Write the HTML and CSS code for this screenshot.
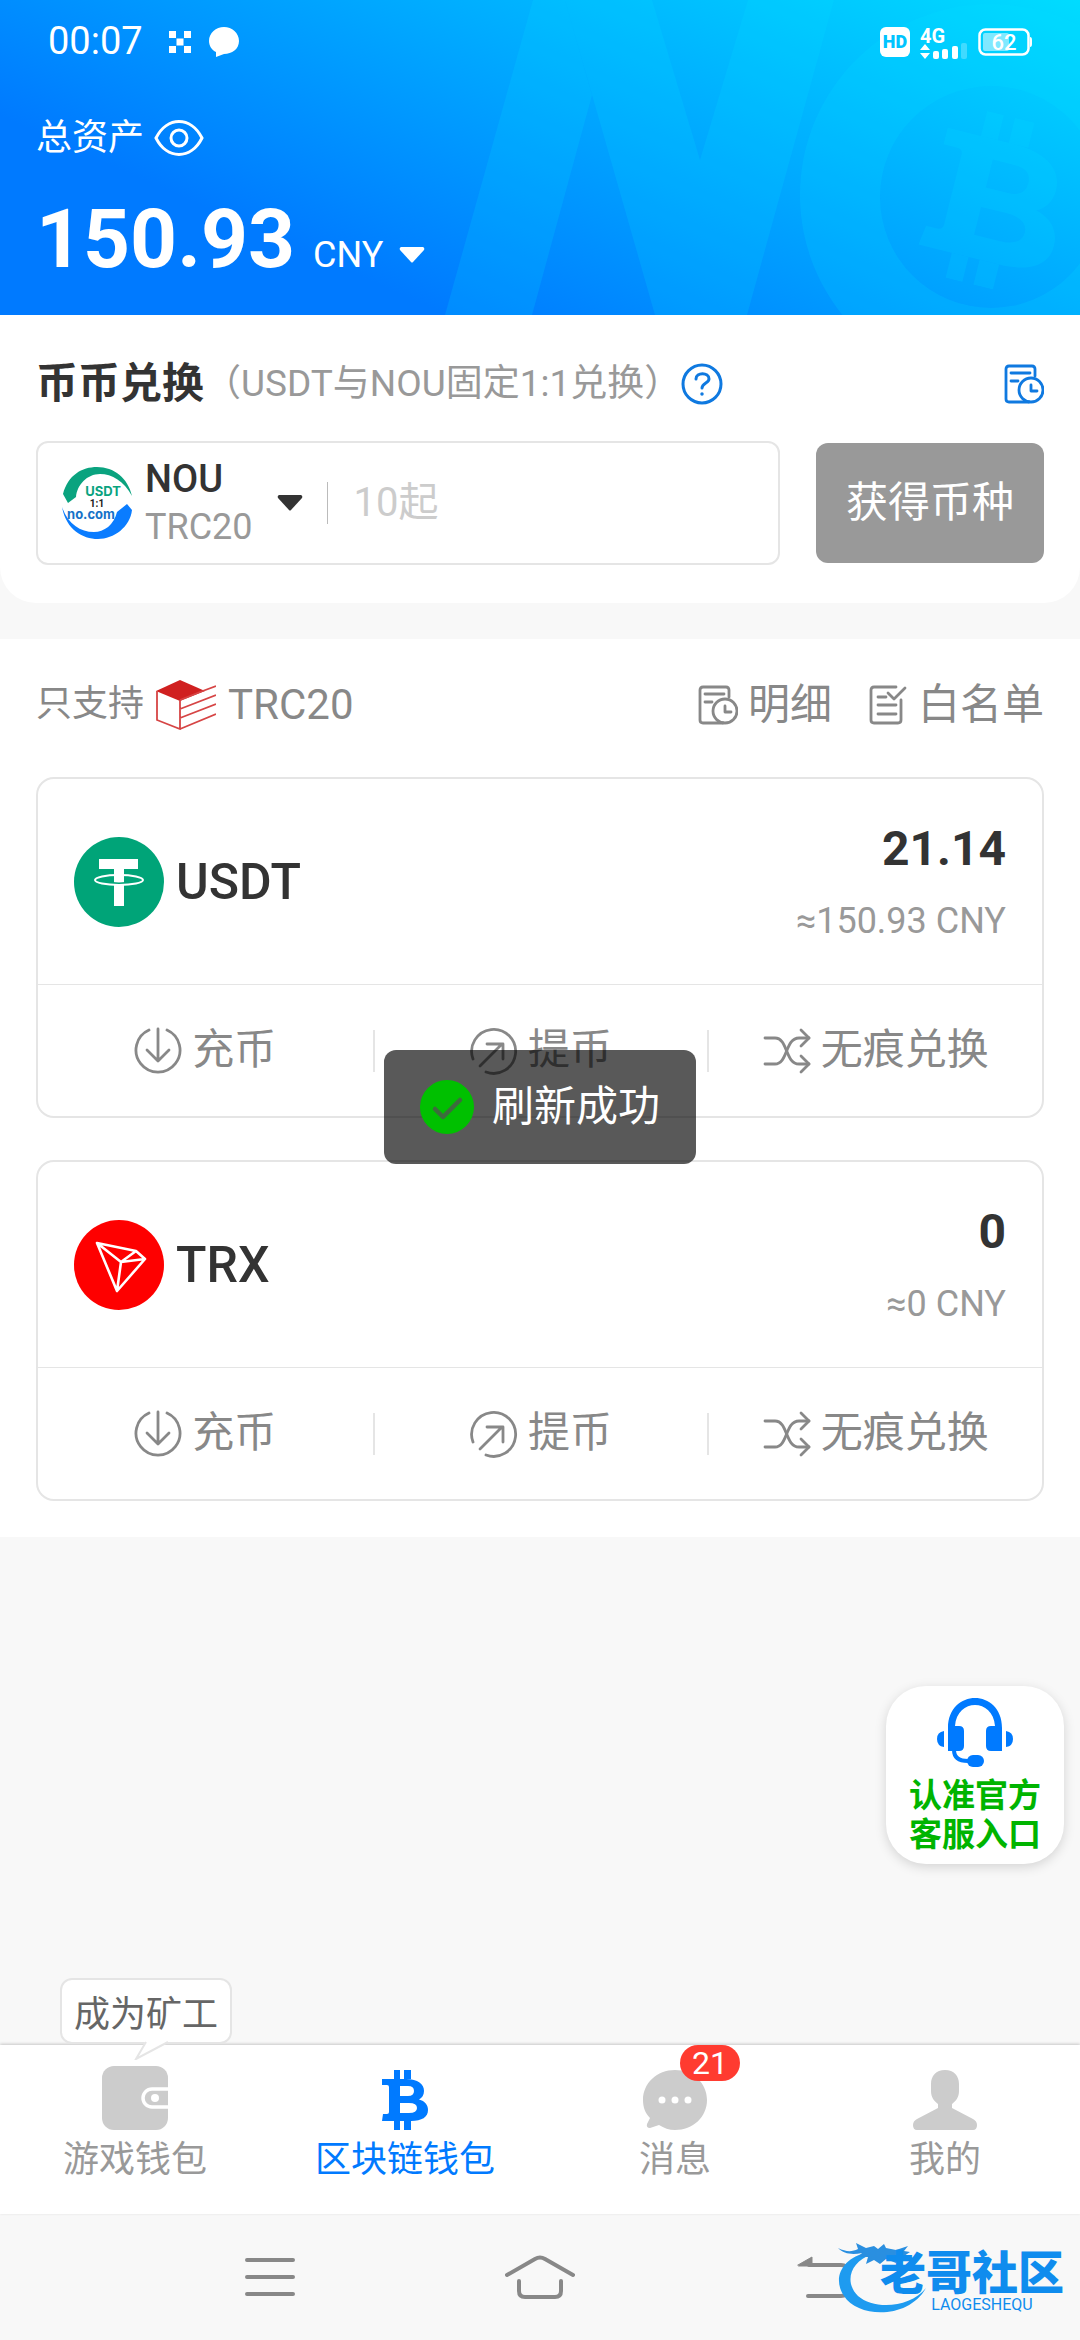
FILE: index.html
```html
<!DOCTYPE html>
<html lang="zh-CN">
<head>
    <meta charset="UTF-8">
    <meta name="viewport" content="width=device-width, initial-scale=1.0">
    <title>区块链钱包</title>
    <link rel="stylesheet" href="styles.css">
</head>
<body>

    <!-- 公用图标 -->
    <svg class="sprite" aria-hidden="true">
        <symbol id="icon-btc" viewBox="0 0 46 60">
            <path fill="currentColor" fill-rule="evenodd" d="M0 9H24C36 9 42 14 42 21C42 25 40 28 37 29.5C43 31 46 35 46 40C46 47 40 51 29 51H0L1 44H5Q7 44 7 42V17Q7 15 5 15H0ZM18 16V26H26Q32 26 32 21T26 16ZM18 33V43H27Q35 43 35 38T27 33Z"/>
            <path fill="currentColor" d="M12 0h6v9h-6zM22 0h7v9h-7zM12 51h6v9h-6zM22 51h7v9h-7z"/>
        </symbol>
        <symbol id="icon-record" viewBox="0 0 40 40">
            <g fill="none" stroke="currentColor" stroke-width="2.8" stroke-linecap="round" stroke-linejoin="round">
                <path d="M31 12V5Q31 2 28 2H5Q2 2 2 5V35Q2 38 5 38H25"/>
                <path d="M7 9H26M7 17H14M27 21V27H33"/>
                <circle cx="27" cy="26" r="12"/>
            </g>
        </symbol>
        <symbol id="icon-list" viewBox="0 0 40 40">
            <g fill="none" stroke="currentColor" stroke-width="2.8" stroke-linecap="round" stroke-linejoin="round">
                <path d="M28 2H6Q3 2 3 5V35Q3 38 6 38H30Q33 38 33 35V15"/>
                <path d="M10 12H18M10 20H28M10 29H28M20 8L26 14L37 3"/>
            </g>
        </symbol>
        <symbol id="icon-in" viewBox="0 0 48 48">
            <g fill="none" stroke="currentColor" stroke-width="2.8" stroke-linecap="round" stroke-linejoin="round">
                <path d="M15 3A22 22 0 1 0 33 3"/>
                <path d="M24 2V34M13 23L24 34L35 23"/>
            </g>
        </symbol>
        <symbol id="icon-out" viewBox="0 0 48 48">
            <g fill="none" stroke="currentColor" stroke-width="2.8" stroke-linecap="round" stroke-linejoin="round">
                <path d="M3 32A22 22 0 1 1 16 45"/>
                <path d="M10 39L32 17M17 17H33V32"/>
            </g>
        </symbol>
        <symbol id="icon-swap" viewBox="0 0 48 48">
            <g fill="none" stroke="currentColor" stroke-width="2.8" stroke-linecap="round" stroke-linejoin="round">
                <path d="M2 11H12C25 11 22 37 36 37H46"/>
                <path d="M2 37H12C25 37 22 11 36 11H46"/>
                <path d="M38 3L46 11L38 19M38 29L46 37L38 45"/>
            </g>
        </symbol>
    </svg>

    <div class="app">

        <!-- 顶部资产 -->
        <header class="header">
            <svg class="header-bg" viewBox="440 0 640 315" aria-hidden="true">
                <g fill="#00e4ff" fill-opacity="0.17">
                    <path d="M533 0H565L592 95L532 315H445Z"/>
                    <path d="M565 0H652L700 160L748 0H834L747 315H655Z"/>
                    <path fill-rule="evenodd" d="M800 195A191 191 0 1 0 1182 195A191 191 0 1 0 800 195ZM880 197A111 111 0 1 0 1102 197A111 111 0 1 0 880 197Z"/>
                </g>
                <g transform="translate(997 202) rotate(14)" color="#00e4ff" opacity="0.15">
                    <use href="#icon-btc" x="-66" y="-86" width="132" height="172"/>
                </g>
            </svg>

            <div class="status">
                <span class="time">00:07</span>
                <svg width="22" height="22" viewBox="0 0 22 22" fill="#fff"><path d="M0 0h7v7H0zM15 0h7v7h-7zM7.500 7.500h7v7h-7zM0 15h7v7H0zM15 15h7v7h-7z"/></svg>
                <svg class="chat" width="30" height="30" viewBox="0 0 30 30" fill="#fff"><path d="M15 0C23 0 30 6 30 14S23 27 15 27L7 30V25C3 23 0 19 0 14C0 6 7 0 15 0Z"/></svg>
                <div class="status-right">
                    <span class="hd">HD</span>
                    <svg width="48" height="40" viewBox="0 -6 48 40" fill="#fff">
                        <text x="0" y="15" class="net">4G</text>
                        <path d="M5 16L10 22H0ZM5 31L10 25H0Z"/>
                        <rect x="13" y="23" width="6" height="8" rx="2"/>
                        <rect x="22" y="21" width="6" height="10" rx="2"/>
                        <rect x="32" y="18" width="6" height="13" rx="2"/>
                        <rect x="41" y="15" width="6" height="16" rx="2" opacity="0.25"/>
                    </svg>
                    <svg width="54" height="28" viewBox="0 0 54 28">
                        <rect x="1.500" y="1.500" width="49" height="25" rx="6" fill="none" stroke="#fff" stroke-width="2.500"/>
                        <rect x="5" y="5" width="26" height="18" rx="2" fill="#fff" opacity="0.5"/>
                        <path d="M52 9Q54 9 54 12V16Q54 19 52 19Z" fill="#fff"/>
                        <text x="26" y="22" text-anchor="middle" class="battery">62</text>
                    </svg>
                </div>
            </div>

            <div class="asset-label">
                <span>总资产</span>
                <button class="icon-btn" aria-label="显示资产">
                    <svg width="50" height="36" viewBox="0 0 50 36" fill="none" stroke="#fff" stroke-width="3"><path d="M2 18C13 -4 37 -4 48 18C37 40 13 40 2 18Z"/><circle cx="25" cy="18" r="8"/></svg>
                </button>
            </div>
            <div class="asset">
                <strong>150.93</strong>
                <button class="currency">CNY <svg width="26" height="16" viewBox="0 0 26 16" fill="#fff"><path d="M2 0H24Q26 1 25 3L14 15Q13 16 12 15L1 3Q0 1 2 0Z"/></svg></button>
            </div>
        </header>

        <!-- 币币兑换 -->
        <div class="exchange-wrap">
            <section class="exchange">
                <div class="exchange-title">
                    <h2>币币兑换</h2>
                    <span class="hint">（USDT与NOU固定1:1兑换）</span>
                    <button class="icon-btn help" aria-label="帮助">
                        <svg width="42" height="42" viewBox="0 0 42 42" fill="none" stroke="#0f79e0" stroke-width="3" stroke-linecap="round"><circle cx="21" cy="21" r="19"/><path d="M15 16C15 9 28 9 28 16C28 20 21 20 21 25"/><circle cx="21" cy="31" r="1" fill="#0f79e0" stroke-width="1.500"/></svg>
                    </button>
                    <button class="icon-btn record" aria-label="兑换记录"><svg width="40" height="40"><use href="#icon-record"/></svg></button>
                </div>
                <div class="exchange-form">
                    <div class="field">
                        <button class="coin-select">
                            <svg width="70" height="72" viewBox="0 0 70 72">
                                <path fill="#0aa37f" d="M1 27C6 8 20 0 35 0C52 0 66 11 70 29C62 14 50 7 38 7C25 7 15 18 14 30L6 36Z"/>
                                <path fill="#0a7cff" d="M65 37L70 43C68 60 52 72 36 72C20 72 4 62 0 40C6 57 18 65 32 65C42 65 52 58 55 45Z"/>
                                <text x="41" y="29" text-anchor="middle" class="logo-text" fill="#0aa37f">USDT</text>
                                <text x="35" y="40" text-anchor="middle" class="logo-ratio" fill="#222">1:1</text>
                                <text x="29" y="52" text-anchor="middle" class="logo-text" fill="#1672c8">no.com</text>
                            </svg>
                            <span class="coin-name">NOU<small>TRC20</small></span>
                            <svg width="26" height="16" viewBox="0 0 26 16" fill="#333"><path d="M2 0H24Q26 1 25 3L14 15Q13 16 12 15L1 3Q0 1 2 0Z"/></svg>
                        </button>
                        <input type="text" class="amount-input" placeholder="10起" aria-label="兑换数量">
                    </div>
                    <button class="get-coin">获得币种</button>
                </div>
            </section>
        </div>

        <!-- 币种列表 -->
        <section class="coins">
            <div class="coins-bar">
                <span class="only">只支持</span>
                <svg width="60" height="50" viewBox="0 0 60 50">
                    <path fill="#d02020" d="M24 0L49 11L24 21L0 11Z"/>
                    <path fill="none" stroke="#d64545" stroke-width="1.800" d="M1 11V40L24 49V20M44 12L60 6M24 29L60 15M24 38L60 24M24 49L60 34M24 20L44 12"/>
                </svg>
                <span>TRC20</span>
                <a href="#" class="link first"><svg width="40" height="40"><use href="#icon-record"/></svg>明细</a>
                <a href="#" class="link"><svg width="40" height="40"><use href="#icon-list"/></svg>白名单</a>
            </div>

            <article class="card">
                <div class="card-top">
                    <svg width="90" height="90" viewBox="0 0 90 90">
                        <circle cx="45" cy="45" r="45" fill="#00a478"/>
                        <path fill="#fff" d="M25 22H64V32H50V69H40V32H25Z"/>
                        <path fill="none" stroke="#00a478" stroke-width="2" d="M38 46Q45 47 52 46"/>
                        <ellipse cx="45" cy="43" rx="24" ry="5" fill="none" stroke="#fff" stroke-width="2"/>
                    </svg>
                    <h3>USDT</h3>
                    <div class="balance"><strong>21.14</strong><span>≈150.93 CNY</span></div>
                </div>
                <div class="card-actions">
                    <button><svg width="48" height="48"><use href="#icon-in"/></svg>充币</button>
                    <button><svg width="48" height="48"><use href="#icon-out"/></svg>提币</button>
                    <button><svg width="48" height="48"><use href="#icon-swap"/></svg>无痕兑换</button>
                </div>
            </article>

            <article class="card">
                <div class="card-top">
                    <svg width="90" height="90" viewBox="0 0 90 90">
                        <circle cx="45" cy="45" r="45" fill="#fe0000"/>
                        <path fill="none" stroke="#fff" stroke-width="2.600" stroke-linejoin="round" d="M23 23L62 31L71 39L43 71ZM23 23L47 42L71 39M47 42L62 31M47 42L43 71"/>
                    </svg>
                    <h3>TRX</h3>
                    <div class="balance"><strong>0</strong><span>≈0 CNY</span></div>
                </div>
                <div class="card-actions">
                    <button><svg width="48" height="48"><use href="#icon-in"/></svg>充币</button>
                    <button><svg width="48" height="48"><use href="#icon-out"/></svg>提币</button>
                    <button><svg width="48" height="48"><use href="#icon-swap"/></svg>无痕兑换</button>
                </div>
            </article>
        </section>

        <!-- 底部导航 -->
        <nav class="tabs">
            <a href="#" class="tab">
                <svg width="66" height="64" viewBox="0 0 66 64"><rect width="66" height="64" rx="12" fill="#ccc"/><path fill="none" stroke="#fff" stroke-width="3.500" d="M66 23H50A9 9 0 0 0 50 41H66"/><circle cx="53" cy="32" r="4" fill="#fff"/></svg>
                游戏钱包
            </a>
            <a href="#" class="tab active">
                <svg width="46" height="60"><use href="#icon-btc"/></svg>
                区块链钱包
            </a>
            <a href="#" class="tab">
                <svg width="64" height="60" viewBox="0 0 64 60" fill="#ccc"><path d="M32 0C50 0 64 13 64 30S50 60 32 60C26 60 21 58 16 55L7 58Q3 58 4 54L7 48C2 43 0 37 0 30C0 13 14 0 32 0Z"/><g fill="#fff"><circle cx="19" cy="30" r="3.500"/><circle cx="32" cy="30" r="3.500"/><circle cx="45" cy="30" r="3.500"/></g></svg>
                消息
                <span class="badge">21</span>
            </a>
            <a href="#" class="tab">
                <svg width="64" height="60" viewBox="0 0 64 60" fill="#ccc"><path d="M32 0C41 0 46 6 46 14V21C46 27 43 31 39 34V38L60 49Q64 51 64 55Q64 60 60 60H4Q0 60 0 55Q0 51 4 49L25 38V34C21 31 18 27 18 21V14C18 6 23 0 32 0Z"/></svg>
                我的
            </a>
            <div class="bubble">
                成为矿工
                <svg class="bubble-tail" width="40" height="20" viewBox="0 0 40 20"><path fill="#fff" d="M12 0L3 18L36 1V0Z"/><path fill="none" stroke="#e5e5e5" stroke-width="2" d="M12 2L2 19L34 2"/></svg>
            </div>
        </nav>

        <a href="#" class="service">
            <svg width="76" height="70" viewBox="0 0 76 70" fill="#007aff">
                <path d="M11 30C11 -10 65 -10 65 30V53H54Q49 53 49 48V33Q49 28 54 28H58C56 0 20 0 18 28H22Q27 28 27 33V48Q27 53 22 53H11Z"/>
                <path d="M7 33V49Q0 48 0 41T7 33ZM69 33V49Q76 48 76 41T69 33Z"/>
                <path d="M17 52Q17 63 31 63" fill="none" stroke="#007aff" stroke-width="4"/>
                <rect x="30" y="57" width="17" height="12" rx="6"/>
            </svg>
            <span>认准官方</span>
            <span>客服入口</span>
        </a>

        <div class="toast" role="status">
            <svg width="54" height="54" viewBox="0 0 54 54"><circle cx="27" cy="27" r="27" fill="#00c000"/><path d="M15 29L23 37L40 20" fill="none" stroke="#3d6b3d" stroke-width="4.500" stroke-linecap="round" stroke-linejoin="round"/></svg>
            刷新成功
        </div>
    </div>

    <!-- 系统按键 -->
    <div class="sysbar">
        <button aria-label="最近任务"><svg width="50" height="42" viewBox="0 0 50 42"><path d="M2 4H48M2 21H48M2 38H48"/></svg></button>
        <button aria-label="主页"><svg width="70" height="44" viewBox="0 0 70 44"><path d="M2 20L30 4Q35 1 40 4L68 20M14 26V36Q14 42 20 42H50Q56 42 56 36V26"/></svg></button>
        <button aria-label="返回"><svg width="98" height="44" viewBox="-36 0 98 44"><path d="M12 10H44Q50 10 50 16V35Q50 41 44 41H11"/><path class="solid" d="M1 10L15 2V11H2Z"/></svg></button>
        <div class="brand">
            <svg width="92" height="72" viewBox="0 0 92 72">
                <path fill="#1e9bf0" d="M30 10C4 16 -6 36 6 54C20 76 70 78 88 46C72 66 36 68 20 54C6 40 12 20 34 12Z"/>
                <path fill="#2a8fe0" d="M0 6C8 10 14 10 20 7L18 1L28 6L36 4L40 7L46 2L48 6L58 8L70 4L66 9L72 10L66 14L70 19L60 17L58 21L48 17L42 22L36 18L28 22L30 15L20 15L24 11C14 13 6 12 0 6Z"/>
            </svg>
            <div class="brand-text"><b>老哥社区</b><small>LAOGESHEQU</small></div>
        </div>
    </div>

</body>
</html>
```

FILE: styles.css
```css
* {
    box-sizing: border-box;
}
body {
    margin: 0;
    min-height: 100vh;
    display: flex;
    flex-direction: column;
    background: #f8f8f8;
    color: #333;
    font-family: Roboto, "Noto Sans CJK SC", sans-serif;
    font-size: 36px;
    line-height: 1.2;
}
button {
    padding: 0;
    border: none;
    background: none;
    color: inherit;
    font: inherit;
}
a {
    color: inherit;
    text-decoration: none;
}
svg {
    display: block;
    flex: none;
}
h2, h3 {
    margin: 0;
}
.sprite {
    position: absolute;
    width: 0;
    height: 0;
}
.app {
    position: relative;
    flex: 1;
    display: flex;
    flex-direction: column;
}

/* header */
.header {
    position: relative;
    padding: 0 36px 26px;
    background: linear-gradient(24deg, #007aff 25%, #00dcff);
    color: #fff;
    overflow: hidden;
}
.header-bg {
    position: absolute;
    top: 0;
    right: 0;
    height: 100%;
}
.status,
.asset-label,
.asset {
    position: relative;
    display: flex;
    align-items: center;
}
.status {
    height: 84px;
    padding: 0 12px;
}
.time {
    margin-right: 26px;
    font-size: 38px;
}
.chat {
    margin-left: 18px;
}
.status-right {
    display: flex;
    align-items: center;
    gap: 10px;
    margin-left: auto;
}
.hd {
    width: 30px;
    border-radius: 6px;
    background: #fff;
    color: #00c4ff;
    font-size: 18px;
    font-weight: 900;
    line-height: 30px;
    text-align: center;
}
.net {
    font-size: 20px;
    font-weight: 700;
}
.battery {
    fill: #fff;
    font-size: 22px;
    font-weight: 500;
}
.asset-label {
    gap: 10px;
    margin-top: 32px;
    line-height: 44px;
}
.asset {
    align-items: baseline;
    margin-top: 29px;
    line-height: 100px;
}
.asset strong {
    font-size: 82px;
    font-weight: 700;
}
.currency {
    display: flex;
    align-items: center;
    gap: 16px;
    margin-left: 18px;
    line-height: 44px;
}

/* exchange */
.exchange-wrap {
    background: #f8f8f8;
    padding-bottom: 36px;
}
.exchange {
    padding: 42px 36px 38px;
    border-radius: 0 0 36px 36px;
    background: #fff;
}
.exchange-title {
    display: flex;
    align-items: center;
    height: 54px;
    white-space: nowrap;
}
.exchange-title h2 {
    font-size: 42px;
    font-weight: 700;
}
.hint {
    color: #999;
    font-size: 37px;
}
.record {
    margin-left: auto;
    color: #0f79e0;
}
.exchange-form {
    display: flex;
    align-items: center;
    gap: 36px;
    margin-top: 30px;
}
.field {
    flex: 1;
    min-width: 0;
    display: flex;
    align-items: center;
    height: 124px;
    padding: 0 24px;
    border: 2px solid #e5e5e5;
    border-radius: 12px;
}
.coin-select {
    display: flex;
    align-items: center;
    text-align: left;
}
.coin-name {
    margin: 0 24px 0 13px;
    font-size: 38px;
    font-weight: 500;
    line-height: 48px;
}
.coin-name small {
    display: block;
    color: #999;
    font-size: 36px;
    font-weight: 400;
}
.logo-text {
    font-family: Inter, sans-serif;
    font-size: 13px;
    font-weight: 700;
}
.logo-ratio {
    font-size: 10px;
    font-weight: 700;
}
.amount-input {
    flex: 1;
    min-width: 0;
    height: 42px;
    margin-left: 24px;
    padding: 0 0 0 26px;
    border: none;
    border-left: 1px solid #bbb;
    background: none;
    font: inherit;
    font-size: 40px;
}
.amount-input::placeholder {
    color: #ccc;
}
.get-coin {
    width: 228px;
    height: 120px;
    border-radius: 12px;
    background: #999;
    color: #fff;
    font-size: 42px;
}

/* coin list */
.coins {
    padding: 36px;
    background: #fff;
}
.coins-bar {
    display: flex;
    align-items: center;
    gap: 12px;
    height: 60px;
    color: #888;
    font-size: 42px;
}
.only {
    font-size: 36px;
}
.link {
    display: flex;
    align-items: center;
    gap: 10px;
    margin-left: 24px;
}
.link.first {
    margin-left: auto;
}
.card {
    margin-top: 42px;
    border: 2px solid #e5e5e5;
    border-radius: 18px;
}
.card-top {
    display: flex;
    align-items: center;
    gap: 12px;
    height: 205px;
    padding: 0 36px;
}
.card-top h3 {
    font-size: 50px;
    font-weight: 500;
}
.balance {
    display: flex;
    flex-direction: column;
    gap: 16px;
    margin-left: auto;
    padding-top: 6px;
    text-align: right;
    line-height: 56px;
}
.balance strong {
    font-size: 48px;
    font-weight: 700;
}
.balance span {
    color: #999;
}
.card-actions {
    display: grid;
    grid-template-columns: repeat(3, 1fr);
    align-items: center;
    height: 132px;
    border-top: 1px solid #e5e5e5;
}
.card-actions button {
    display: flex;
    align-items: center;
    justify-content: center;
    gap: 10px;
    height: 42px;
    color: #888;
    font-size: 42px;
}
.card-actions button + button {
    border-left: 2px solid #e5e5e5;
}

/* bottom tabs */
.tabs {
    position: relative;
    display: grid;
    grid-template-columns: repeat(4, 1fr);
    margin-top: auto;
    background: #fff;
    box-shadow: 0 -1px 3px rgba(0, 0, 0, 0.2);
}
.tab {
    position: relative;
    display: flex;
    flex-direction: column;
    align-items: center;
    justify-content: flex-end;
    height: 169px;
    padding-bottom: 30px;
    color: #999;
    line-height: 48px;
}
.tab svg {
    margin-bottom: 6px;
}
.tab.active {
    color: #007aff;
}
.badge {
    position: absolute;
    top: 0;
    left: 50%;
    width: 60px;
    margin-left: 5px;
    border-radius: 18px;
    background: #ff3b30;
    color: #fff;
    font-size: 32px;
    line-height: 36px;
    text-align: center;
}
.bubble {
    position: absolute;
    left: 60px;
    bottom: 170px;
    padding: 8px 12px 0;
    border: 2px solid #e5e5e5;
    border-radius: 12px;
    background: #fff;
    color: #666;
    line-height: 54px;
}
.bubble-tail {
    position: absolute;
    top: 60px;
    left: 72px;
}

/* floating parts */
.service {
    position: absolute;
    right: 16px;
    bottom: 350px;
    width: 178px;
    height: 178px;
    display: flex;
    flex-direction: column;
    align-items: center;
    padding-top: 12px;
    border-radius: 40px;
    background: #fff;
    box-shadow: 0 3px 12px rgba(0, 0, 0, 0.15);
    color: #00b400;
    font-size: 33px;
    font-weight: 700;
    line-height: 39px;
}
.service svg {
    margin-bottom: 8px;
}
.toast {
    position: absolute;
    top: 50%;
    left: 50%;
    transform: translate(-50%, -50%);
    display: flex;
    align-items: center;
    gap: 18px;
    height: 114px;
    padding: 0 36px;
    border-radius: 12px;
    background: rgba(0, 0, 0, 0.65);
    color: #fff;
    font-size: 42px;
    white-space: nowrap;
}

/* system keys */
.sysbar {
    position: relative;
    display: grid;
    grid-template-columns: repeat(3, 1fr);
    height: 126px;
    padding: 0 135px;
}
.sysbar button {
    display: flex;
    align-items: center;
    justify-content: center;
}
.sysbar button path {
    fill: none;
    stroke: #888;
    stroke-width: 4;
    stroke-linecap: round;
}
.sysbar button .solid {
    fill: #888;
    stroke-width: 1;
}
.brand {
    position: absolute;
    right: 16px;
    bottom: 26px;
    display: flex;
    align-items: flex-end;
}
.brand svg {
    margin-right: -50px;
}
.brand-text {
    display: flex;
    flex-direction: column;
    align-items: center;
    color: #0f8cee;
}
.brand-text b {
    font-size: 46px;
    font-weight: 900;
    line-height: 46px;
}
.brand-text small {
    margin-left: 20px;
    font-size: 16px;
    line-height: 18px;
}
```
